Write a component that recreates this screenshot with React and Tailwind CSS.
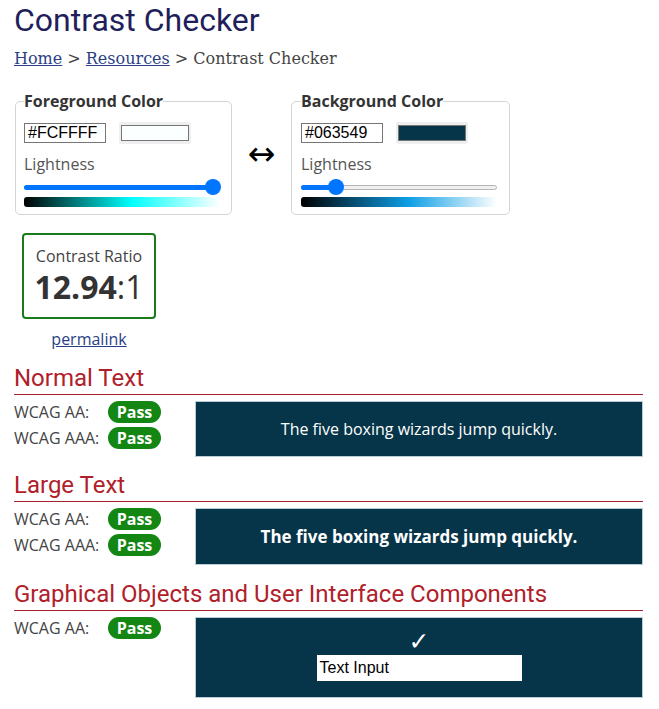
import React from "react";

const sans = "font-['Open_Sans',sans-serif]";
const roboto = "font-['Roboto',sans-serif]";

function ColorPicker({ legend, hex, swatch, thumb, filled, gradient, width }) {
  return (
    <fieldset className={`${width} rounded-[5px] border border-[#d4d4d4] pt-[10px] pb-[7px]`}>
      <legend className={`${sans} text-[16px] font-bold leading-[22px] text-[#333]`}>{legend}</legend>
      <div className="flex items-center gap-[13px]">
        <div className="h-[20px] w-[82px] border border-[#767676] bg-white px-[3px] font-['Liberation_Sans',sans-serif] text-[16px] leading-[18px] text-black">
          {hex}
        </div>
        <div className="flex h-[22px] w-[72px] items-center justify-center rounded-[2px] bg-[#efefef]">
          <div className="h-[16px] w-[68px] border border-[#767676]" style={{ background: swatch }} />
        </div>
      </div>
      <div className={`${sans} mt-[9px] text-[16px] leading-[22px] text-[#555]`}>Lightness</div>
      <div className="relative mt-[4px] h-[16px] w-[196px]">
        <div className="absolute left-0 right-0 top-[6px] h-[5px] rounded-full border border-[#b5b5b5] bg-[#efefef]" />
        <div className="absolute left-0 top-[6px] h-[5px] rounded-full bg-[#0075ff]" style={{ width: filled }} />
        <div className="absolute top-0 h-[16px] w-[16px] rounded-full bg-[#0075ff]" style={{ left: thumb }} />
      </div>
      <div className="mt-[2px] h-[10px] w-[196px] rounded-[3px]" style={{ background: gradient }} />
    </fieldset>
  );
}

function Pass() {
  return (
    <span className={`${sans} inline-flex h-[22px] w-[53px] items-center justify-center rounded-full bg-[#138613] text-[16px] font-bold text-white`}>
      Pass
    </span>
  );
}

function Section({ title, rows, children, boxClass, className }) {
  return (
    <section className={className}>
      <h2 className={`${roboto} border-b border-[#a3242b] pb-[1px] text-[24px] leading-[30px] text-[#b0202a]`}>{title}</h2>
      <div className="mt-[6px] flex">
        <div className="w-[181px] shrink-0">
          {rows.map((r) => (
            <div key={r} className="flex h-[26px] items-start">
              <span className={`${sans} w-[94px] text-[16px] leading-[22px] text-[#444]`}>{r}</span>
              <Pass />
            </div>
          ))}
        </div>
        <div className={`flex flex-1 flex-col items-center border border-[#b9ccd6] bg-[#063549] ${boxClass}`}>
          {children}
        </div>
      </div>
    </section>
  );
}

export default function App() {
  return (
    <div className="min-h-[709px] w-[659px] bg-white pl-[14px] pr-[16px]">
      <h1 className={`${roboto} pt-[1px] text-[32px] leading-[38px] text-[#1f1f5c]`}>Contrast Checker</h1>
      <nav className="mt-[9px] font-['DejaVu_Serif',serif] text-[16px] leading-[22px] text-[#444]">
        <a className="text-[#2b3f86] underline">Home</a> &gt; <a className="text-[#2b3f86] underline">Resources</a> &gt; Contrast Checker
      </nav>

      <div className="mt-[20px] flex items-center pl-[1px]">
        <ColorPicker
          width="w-[217px] px-2"
          legend="Foreground Color"
          hex="#FCFFFF"
          swatch="#fcffff"
          thumb="181px"
          filled="190px"
          gradient="linear-gradient(to right, #000, #00ffff 55%, #fff)"
        />
        <div className="flex w-[59px] justify-center pt-[3px] font-['DejaVu_Sans',sans-serif] text-[33px] leading-[36px] text-black">↔</div>
        <ColorPicker
          width="w-[219px] pl-[9px] pr-2"
          legend="Background Color"
          hex="#063549"
          swatch="#063549"
          thumb="27px"
          filled="35px"
          gradient="linear-gradient(to right, #000, #0e9fe6 55%, #fff)"
        />
      </div>

      <div className="ml-[8px] mt-[18px] w-[134px]">
        <div className="flex h-[86px] flex-col items-center justify-center rounded-[4px] border-2 border-[#1a7a1a]">
          <div className={`${sans} text-[16px] leading-[22px] text-[#444]`}>Contrast Ratio</div>
          <div className={`${sans} text-[32px] leading-[40px] text-[#333]`}>
            <span className="font-bold">12.94</span>:1
          </div>
        </div>
        <div className="mt-[9px] text-center leading-[22px]">
          <a className={`${sans} text-[16px] leading-[22px] text-[#2b3f86] underline`}>permalink</a>
        </div>
      </div>

      <Section className="mt-[13px]" title="Normal Text" rows={["WCAG AA:", "WCAG AAA:"]} boxClass="h-[56px] justify-center">
        <span className={`${sans} text-[16px] text-white`}>The five boxing wizards jump quickly.</span>
      </Section>

      <Section className="mt-[13px]" title="Large Text" rows={["WCAG AA:", "WCAG AAA:"]} boxClass="h-[57px] justify-center">
        <span className={`${sans} text-[17px] font-bold text-white`}>The five boxing wizards jump quickly.</span>
      </Section>

      <Section className="mt-[14px]" title="Graphical Objects and User Interface Components" rows={["WCAG AA:"]} boxClass="h-[81px] pt-[12px]">
        <span className="font-['DejaVu_Sans',sans-serif] text-[25px] leading-[24px] text-white">✓</span>
        <div className="mt-[1px] h-[26px] w-[205px] bg-white px-[3px] font-['Liberation_Sans',sans-serif] text-[16px] leading-[26px] text-black">
          Text Input
        </div>
      </Section>
    </div>
  );
}
